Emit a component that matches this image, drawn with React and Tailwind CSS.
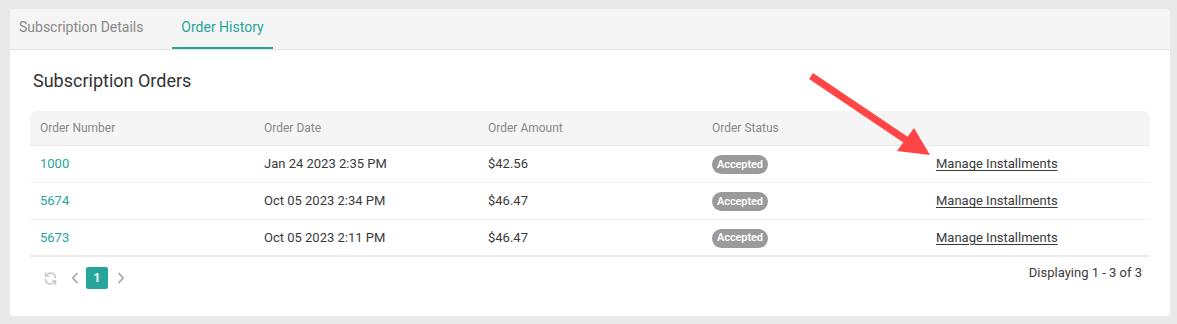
import React from 'react';

const orders = [
  { id: '1000', date: 'Jan 24 2023 2:35 PM', amount: '$42.56', status: 'Accepted' },
  { id: '5674', date: 'Oct 05 2023 2:34 PM', amount: '$46.47', status: 'Accepted' },
  { id: '5673', date: 'Oct 05 2023 2:11 PM', amount: '$46.47', status: 'Accepted' },
];

const RefreshIcon = () => (
  <svg width="15" height="15" viewBox="0 0 24 24" fill="none" stroke="#c8c8c8" strokeWidth="2.4" strokeLinecap="round" strokeLinejoin="round">
    <path d="M20 11a8 8 0 0 0-14.5-4.5L4 8" />
    <path d="M4 3v5h5" />
    <path d="M4 13a8 8 0 0 0 14.5 4.5L20 16" />
    <path d="M20 21v-5h-5" />
  </svg>
);

const Chevron = ({ dir }) => (
  <svg width="8" height="12" viewBox="0 0 8 12" fill="none" stroke="#a8a8a8" strokeWidth="1.8" strokeLinecap="round" strokeLinejoin="round">
    {dir === 'left' ? <path d="M6 1.5 1.8 6 6 10.5" /> : <path d="M2 1.5 6.2 6 2 10.5" />}
  </svg>
);

const App = () => {
  return (
    <div className="relative w-[1177px] h-[324px] bg-[#e9e9e9] pt-[9px] px-[10px] font-['Roboto',sans-serif]">
      <div className="w-[1160px] h-[307px] bg-white rounded-[3px] overflow-hidden">
        {/* tabs */}
        <div className="flex h-[41px] bg-[#f5f5f5] border-b border-[#e3e3e3] pl-[9px] text-[14px]">
          <div className="flex items-center text-[#888] pb-[3px] w-[153px]">Subscription Details</div>
          <div className="relative flex items-center w-[101px] justify-center text-[#26a69a] pb-[3px]">
            Order History
            <div className="absolute left-0 right-0 bottom-0 h-[2px] bg-[#26a69a]" />
          </div>
        </div>

        <div className="px-[20px]">
          <h2 className="text-[18px] text-[#333] pl-[3px] pt-[20px] h-[61px] leading-[22px]">Subscription Orders</h2>

          <div className="w-[1120px]">
            <div className="grid grid-cols-5 h-[35px] items-center bg-[#f5f5f5] rounded-t-[6px] border-b border-[#e6e6e6] text-[12px] text-[#888]">
              <div className="pl-[10px]">Order Number</div>
              <div className="pl-[10px]">Order Date</div>
              <div className="pl-[10px]">Order Amount</div>
              <div className="pl-[10px]">Order Status</div>
              <div />
            </div>
            {orders.map((o, i) => (
              <div
                key={o.id}
                className={`grid grid-cols-5 h-[37px] items-center text-[13px] text-[#3a3a3a] ${i === orders.length - 1 ? 'border-b-2 border-[#ececec]' : 'border-b border-[#efefef]'}`}
              >
                <div className="pl-[10px] text-[#26a69a]">{o.id}</div>
                <div className="pl-[10px]">{o.date}</div>
                <div className="pl-[10px]">{o.amount}</div>
                <div className="pl-[10px]">
                  <span className="inline-flex items-center h-[19px] px-[5px] rounded-full bg-[#9a9a9a] text-white text-[11px] font-semibold tracking-[-0.1px]">{o.status}</span>
                </div>
                <div className="pl-[10px]">
                  <span className="underline underline-offset-2">Manage Installments</span>
                </div>
              </div>
            ))}

            <div className="flex items-center justify-between h-[38px] pt-[4px]">
              <div className="flex items-center pl-[13px]">
                <RefreshIcon />
                <span className="ml-[13px]"><Chevron dir="left" /></span>
                <span className="ml-[7px] w-[22px] h-[22px] rounded-[2px] bg-[#26a69a] text-white text-[12px] font-bold flex items-center justify-center">1</span>
                <span className="ml-[9px]"><Chevron dir="right" /></span>
              </div>
              <div className="text-[13px] text-[#3a3a3a] pr-[8px] -mt-[10px]">Displaying 1 - 3 of 3</div>
            </div>
          </div>
        </div>
      </div>

      <svg className="absolute top-0 left-0 pointer-events-none" width="1177" height="324">
        <line x1="811" y1="76" x2="909" y2="142" stroke="#ff4545" strokeWidth="7" />
        <polygon points="930,155 897,151 914,128" fill="#ff4545" />
      </svg>
    </div>
  );
};

export default App;
